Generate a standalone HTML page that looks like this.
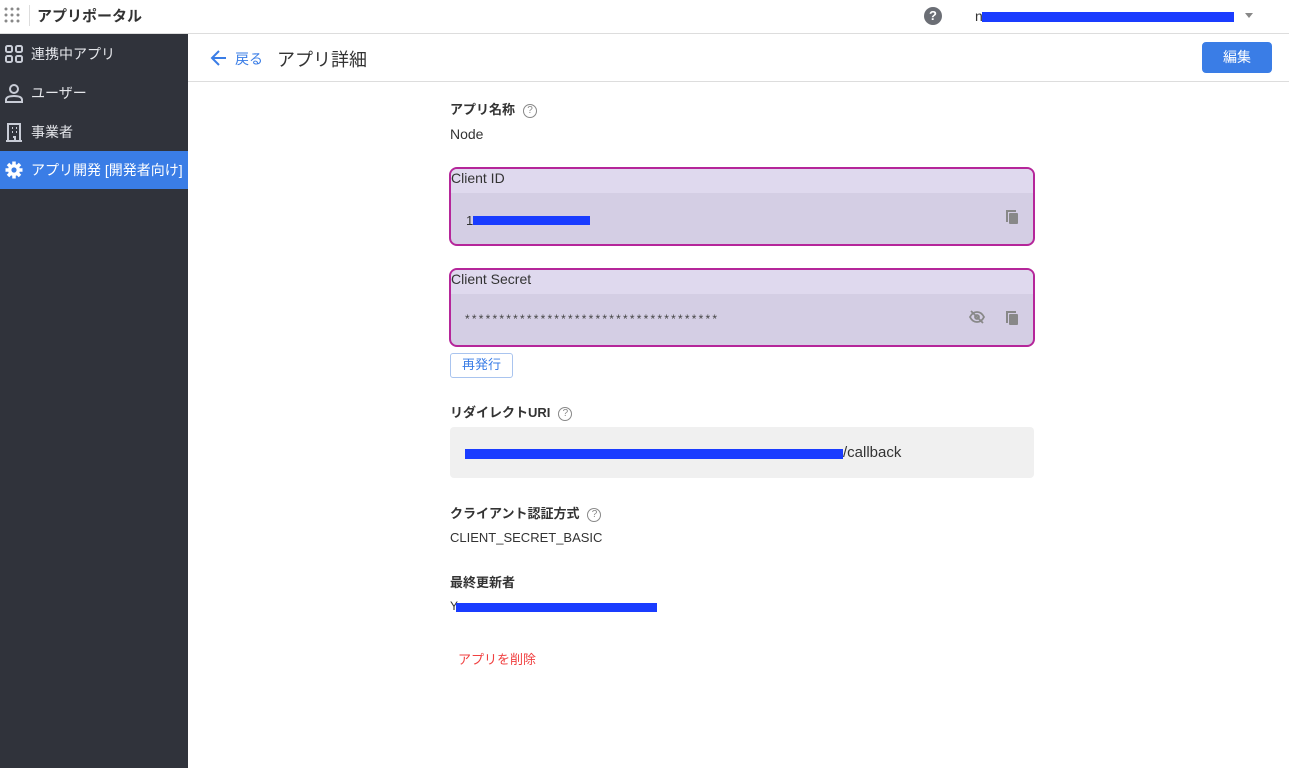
<!DOCTYPE html>
<html><head><meta charset="utf-8"><style>
*{box-sizing:border-box;margin:0;padding:0}
body{width:1289px;height:768px;overflow:hidden;background:#fff;font-family:"Liberation Sans","Noto Sans CJK JP",sans-serif;color:#333;position:relative}
.abs{position:absolute}
.top{left:0;top:0;width:1289px;height:34px;border-bottom:1px solid #ddd;background:#fff}
.side{left:0;top:34px;width:188px;height:734px;background:#30333b}
.nav{position:absolute;left:0;width:188px;height:38px;color:#e4e6ea;font-size:14px;line-height:38px;padding-left:31px}
.nav svg{position:absolute;left:4px;top:9px}
.act{background:#3a7de6;color:#fff}
.sub{left:188px;top:34px;width:1101px;height:48px;border-bottom:1px solid #ddd}
.lbl{font-size:13px;font-weight:bold;color:#333}
.q{display:inline-block;width:14px;height:14px;border:1.3px solid #888;border-radius:50%;font-size:10px;line-height:12px;text-align:center;color:#888;font-weight:normal;vertical-align:1px;margin-left:8px}
.box{left:449px;width:586px;border:2px solid #b5269a;border-radius:8px;background:#d4cee4;overflow:hidden}
.box .h{height:24px;background:#dfd9ee;font-size:14px;line-height:18px;padding-left:0;color:#333}
.blue{background:#1a3cff;display:inline-block;height:9px}
.copy{position:absolute;width:9px;height:11px;background:#888;border-radius:1px}
.copy:before{content:"";position:absolute;left:-3px;top:-3px;width:8px;height:10px;border-left:2px solid #888;border-top:2px solid #888}
</style></head><body>
<div class="abs top">
 <svg class="abs" style="left:4px;top:7px" width="18" height="18"><g fill="#888"><circle cx="2" cy="2" r="1.5"/><circle cx="8" cy="2" r="1.5"/><circle cx="14" cy="2" r="1.5"/><circle cx="2" cy="8" r="1.5"/><circle cx="8" cy="8" r="1.5"/><circle cx="14" cy="8" r="1.5"/><circle cx="2" cy="14" r="1.5"/><circle cx="8" cy="14" r="1.5"/><circle cx="14" cy="14" r="1.5"/></g></svg>
 <div class="abs" style="left:29px;top:5px;width:1px;height:21px;background:#ddd"></div>
 <div class="abs" style="left:37px;top:5px;font-size:15px;font-weight:bold;color:#333">アプリポータル</div>
 <div class="abs" style="left:924px;top:7px;width:18px;height:18px;border-radius:50%;background:#6b6e75;color:#fff;font-size:13px;font-weight:bold;text-align:center;line-height:18px">?</div>
 <div class="abs" style="left:975px;top:8px;font-size:14px;color:#333">n</div>
 <div class="abs blue" style="left:982px;top:12px;width:252px;height:10px"></div>
 <div class="abs" style="left:1245px;top:13px;border:4px solid transparent;border-top:5px solid #888"></div>
</div>
<div class="abs side">
 <div class="nav" style="top:1px"><svg width="20" height="20" fill="none" stroke="#c8ccd6" stroke-width="2"><rect x="2" y="2" width="6" height="6" rx="1.5"/><rect x="12" y="2" width="6" height="6" rx="1.5"/><rect x="2" y="12" width="6" height="6" rx="1.5"/><rect x="12" y="12" width="6" height="6" rx="1.5"/></svg>連携中アプリ</div>
 <div class="nav" style="top:40px"><svg width="20" height="20" fill="none" stroke="#c8ccd6" stroke-width="2"><circle cx="10" cy="6" r="4"/><path d="M2 19v-2c0-3 4-4 8-4s8 1 8 4v2z"/></svg>ユーザー</div>
 <div class="nav" style="top:79px"><svg width="20" height="20" fill="none" stroke="#c8ccd6" stroke-width="2"><path d="M4 19V2h12v17M2 19h16"/><path d="M8 6h1M12 6h1M8 10h1M12 10h1M9 15h2v4"/></svg>事業者</div>
 <div class="nav act" style="top:117px"><svg width="20" height="20"><g stroke="#fff" stroke-width="3.5" stroke-linecap="butt"><path d="M10 1.5v17M1.5 10h17M4 4l12 12M16 4L4 16"/></g><circle cx="10" cy="10" r="6" fill="#fff"/><circle cx="10" cy="10" r="2.6" fill="#3a7de6"/></svg>アプリ開発 [開発者向け]</div>
</div>
<div class="abs sub">
 <svg class="abs" style="left:22px;top:15px" width="18" height="18" fill="none" stroke="#3a7de6" stroke-width="2"><path d="M16 9H3M9 2L2 9l7 7"/></svg>
 <div class="abs" style="left:47px;top:15px;font-size:14px;color:#3a7de6">戻る</div>
 <div class="abs" style="left:89px;top:12px;font-size:18px;color:#333">アプリ詳細</div>
 <div class="abs" style="left:1014px;top:8px;width:70px;height:31px;background:#3a7de6;border-radius:4px;color:#fff;font-size:14px;text-align:center;line-height:31px">編集</div>
</div>
<div class="abs lbl" style="left:450px;top:99px">アプリ名称<span class="q">?</span></div>
<div class="abs" style="left:450px;top:126px;font-size:14px">Node</div>

<div class="abs box" style="top:167px;height:79px"><div class="h">Client ID</div>
 <div class="abs" style="left:15px;top:44px;font-size:13px">1</div><div class="abs blue" style="left:22px;top:47px;width:117px"></div>
 <div class="copy" style="left:558px;top:44px"></div></div>
<div class="abs box" style="top:268px;height:79px"><div class="h">Client Secret</div>
 <div class="abs" style="left:14px;top:42px;font-size:12px;letter-spacing:2.2px;color:#444">*************************************</div>
 <svg class="abs" style="left:518px;top:40px" width="16" height="14" fill="none" stroke="#888" stroke-width="1.8"><path d="M1 7c2-4 5-5 7-5s5 1 7 5c-2 4-5 5-7 5s-5-1-7-5z"/><circle cx="8" cy="7" r="2"/><path d="M2 1l12 12"/></svg>
 <div class="copy" style="left:558px;top:44px"></div></div>
<div class="abs" style="left:450px;top:353px;width:63px;height:25px;border:1.5px solid #a9c4ef;border-radius:3px;color:#3a7de6;font-size:13px;text-align:center;line-height:22px">再発行</div>

<div class="abs lbl" style="left:450px;top:402px">リダイレクトURI<span class="q">?</span></div>
<div class="abs" style="left:450px;top:427px;width:584px;height:51px;background:#f0f0f0;border-radius:4px"></div>
<div class="abs blue" style="left:465px;top:449px;width:378px;height:10px"></div>
<div class="abs" style="left:843px;top:444px;font-size:15px;color:#333">/callback</div>

<div class="abs lbl" style="left:450px;top:503px">クライアント認証方式<span class="q">?</span></div>
<div class="abs" style="left:450px;top:530px;font-size:13px">CLIENT_SECRET_BASIC</div>
<div class="abs lbl" style="left:450px;top:572px">最終更新者</div>
<div class="abs" style="left:450px;top:599px;font-size:12px">Y</div><div class="abs blue" style="left:456px;top:603px;width:201px"></div>
<div class="abs" style="left:458px;top:649px;font-size:13px;color:#f04040">アプリを削除</div>
</body></html>
